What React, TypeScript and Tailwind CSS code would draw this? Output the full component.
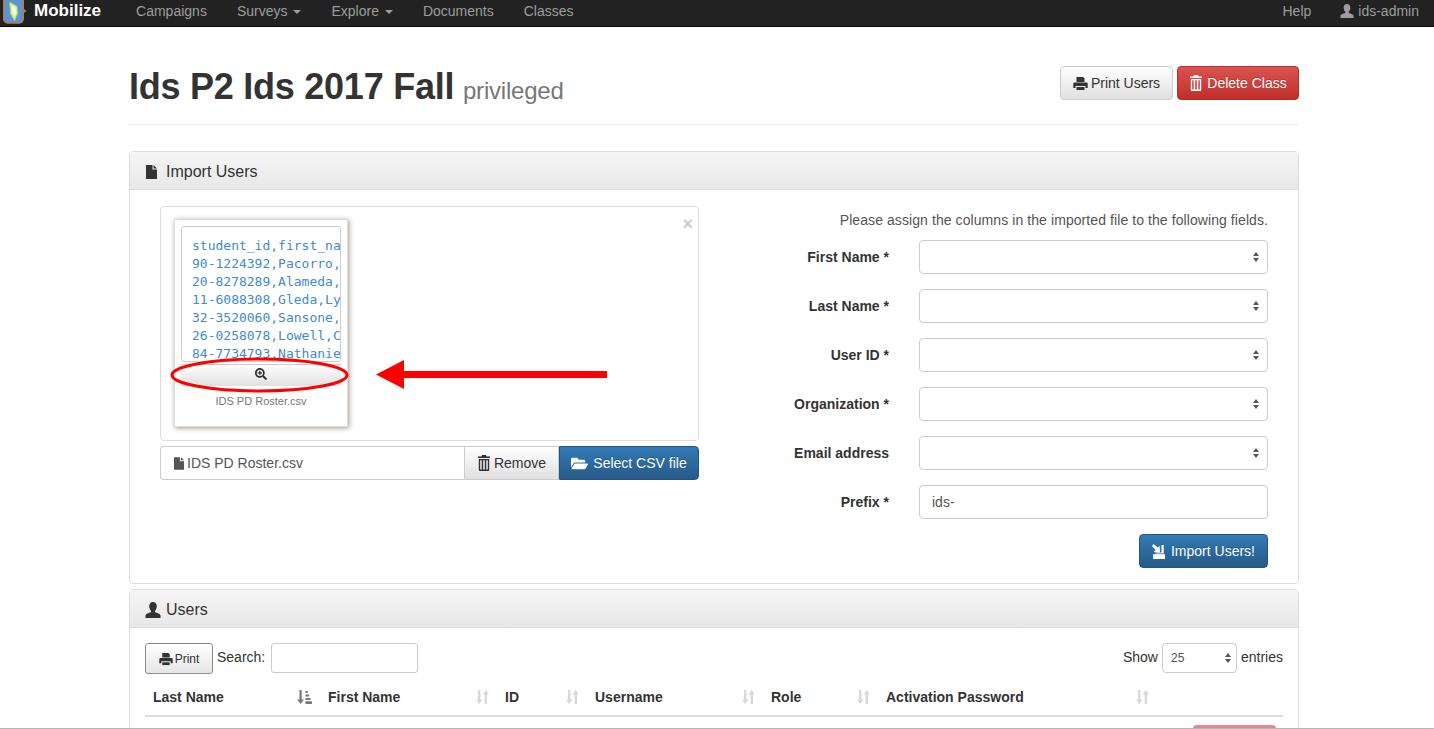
import { FaFolderOpen, FaSearchPlus } from "react-icons/fa";

const FIELDS = ["First Name *", "Last Name *", "User ID *", "Organization *", "Email address"];

const CSV_LINES = [
  "student_id,first_na",
  "90-1224392,Pacorro,",
  "20-8278289,Alameda,",
  "11-6088308,Gleda,Ly",
  "32-3520060,Sansone,",
  "26-0258078,Lowell,C",
  "84-7734793,Nathanie",
];

const COLUMNS = [
  { label: "Last Name", width: "w-[175px]", active: true },
  { label: "First Name", width: "w-[177px]", active: false },
  { label: "ID", width: "w-[90px]", active: false },
  { label: "Username", width: "w-[176px]", active: false },
  { label: "Role", width: "w-[115px]", active: false },
  { label: "Activation Password", width: "w-[279px]", active: false },
];

/* ── Glyphs drawn by hand, the icon packs have no close match ── */
function PrintIcon({ size = 15 }: { size?: number }) {
  return (
    <svg width={size} height={size} viewBox="0 0 15 15" fill="currentColor">
      <path d="M3.5 1h6.5l1.5 1.5V6h-8z" />
      <path d="M1.5 6.5h12a1.2 1.2 0 0 1 1.2 1.2V12h-2.2v-2h-10v2H.3V7.7a1.2 1.2 0 0 1 1.2-1.2z" />
      <path d="M3.5 11h8v3h-8z" />
    </svg>
  );
}

function TrashIcon() {
  return (
    <svg width="14" height="16" viewBox="0 0 14 16" fill="currentColor">
      <path d="M5 0h4l.6 1.5H13v1.6H1V1.5h3.4z" />
      <path
        fillRule="evenodd"
        d="M1.8 4h10.4v11a1 1 0 0 1-1 1H2.8a1 1 0 0 1-1-1zM3.2 5.2v9.4h1.5V5.2zM6.2 5.2v9.4h1.6V5.2zM9.3 5.2v9.4h1.5V5.2z"
      />
    </svg>
  );
}

function UserIcon({ size = 14 }: { size?: number }) {
  return (
    <svg width={size} height={size} viewBox="0 0 16 16" fill="currentColor">
      <path d="M8 0c2.4 0 3.8 1.7 3.8 4.2 0 1.8-.7 3.5-1.8 4.5v1.6c2.6.8 5.5 1.6 5.5 3.2V16H.5v-2.5c0-1.6 2.9-2.4 5.5-3.2V8.7C4.9 7.7 4.2 6 4.2 4.2 4.2 1.7 5.6 0 8 0z" />
    </svg>
  );
}

function FileIcon({ width = 11, height = 14 }: { width?: number; height?: number }) {
  return (
    <svg width={width} height={height} viewBox="0 0 11 14" fill="currentColor">
      <path d="M0 0h6.5v4.5H11V14H0z" />
      <path d="M7.5 0L11 3.5H7.5z" />
    </svg>
  );
}

function ImportIcon() {
  return (
    <svg width="14" height="15" viewBox="0 0 14 15" fill="currentColor">
      <path d="M1.5 0l4.2 3.6L7.5 1.8l.6 6.6-6.4-.4 1.9-2L0 2z" />
      <path d="M9.5 1h2.2v8.5H3.5V8.4h6z" />
      <path d="M1 10.2h12V15H1z" />
    </svg>
  );
}

/* Up/down arrows of the sortable table headers */
function SortIcon({ active }: { active: boolean }) {
  if (active) {
    return (
      <svg width="15" height="14" viewBox="0 0 15 14" className="text-[#777]" fill="currentColor">
        <path d="M2.5 0h2.2v9.5H7L3.6 14 .2 9.5h2.3z" />
        <path d="M8.5 1h2.2v2H8.5zM8.5 4.5h3.6v2H8.5zM8.5 8h5v2h-5zM8.5 11.3h6.4V14H8.5z" />
      </svg>
    );
  }
  return (
    <svg width="13" height="14" viewBox="0 0 13 14" className="text-[#d9d9d9]" fill="currentColor">
      <path d="M2 0h2.4v9.5h2L3.2 14 0 9.5h2z" />
      <path d="M8.6 14H11V4.5h2L9.8 0 6.6 4.5h2z" />
    </svg>
  );
}

function SelectArrows() {
  return (
    <svg width="8" height="12" viewBox="0 0 8 12" className="text-[#555]" fill="currentColor">
      <path d="M4 1l3 4H1zM4 11L1 7h6z" />
    </svg>
  );
}

export default function App() {
  return (
    <div className="relative h-[729px] w-[1434px] overflow-hidden bg-white font-['Liberation_Sans',Arial,sans-serif] text-[14px] text-[#333]">
      {/* ── Navbar ──────────────────────────── */}
      <nav className="flex h-[27px] items-center border-b border-[#080808] bg-[#222] text-[#9d9d9d]">
        <div className="flex h-full items-center overflow-hidden pl-[3px]">
          <svg width="24" height="26" viewBox="0 0 24 26">
            <rect x="0.75" y="-3" width="19.5" height="26" rx="4" fill="#5d92d6" stroke="#b5803f" strokeWidth="1.5" />
            <path d="M20.5 8.5l3 2.5-3 2.5z" fill="#b5803f" />
            <path d="M6.5 2l7.5 4 1 7-3.5 8-4-7z" fill="#d6ec9a" stroke="#9cc653" strokeWidth="0.8" />
            <path d="M8.5 5l4 2.5.6 5-1.8 3.5-2-4z" fill="#f6fbe4" />
          </svg>
          <span className="mb-[4px] ml-[7px] text-[17px] font-bold text-white">Mobilize</span>
        </div>
        <div className="mb-[4px] ml-[35px] flex items-center gap-[30px]">
          <span>Campaigns</span>
          <span className="flex items-center gap-[6px]">
            Surveys <span className="mt-[2px] border-x-[4px] border-t-[4px] border-x-transparent border-t-[#9d9d9d]" />
          </span>
          <span className="flex items-center gap-[6px]">
            Explore <span className="mt-[2px] border-x-[4px] border-t-[4px] border-x-transparent border-t-[#9d9d9d]" />
          </span>
          <span>Documents</span>
          <span>Classes</span>
        </div>
        <div className="mb-[4px] ml-auto flex items-center gap-[29px] pr-[15px]">
          <span>Help</span>
          <span className="flex items-center gap-[4px]">
            <UserIcon size={14} /> ids-admin
          </span>
        </div>
      </nav>

      <div className="ml-[129px] w-[1170px]">
        {/* ── Page header ─────────────────────── */}
        <div className="flex h-[98px] items-start justify-between border-b border-[#eee] pt-[39px]">
          <h1 className="mt-[1px] text-[36px] leading-[40px] font-bold tracking-[-0.25px]">
            Ids P2 Ids 2017 Fall{" "}
            <span className="ml-[-1px] text-[24px] font-normal tracking-[-0.2px] text-[#777]">privileged</span>
          </h1>
          <div className="flex gap-[4px]">
            <button className="flex h-[34px] w-[113px] items-center justify-center gap-[3px] rounded-[4px] border border-[#ccc] bg-gradient-to-b from-white to-[#e0e0e0]">
              <PrintIcon /> Print Users
            </button>
            <button className="flex h-[34px] w-[122px] items-center justify-center gap-[4px] rounded-[4px] border border-[#b92c28] bg-gradient-to-b from-[#d9534f] to-[#c12e2a] text-white [text-shadow:0_-1px_0_rgba(0,0,0,0.2)]">
              <TrashIcon /> Delete Class
            </button>
          </div>
        </div>

        {/* ── Import Users panel ──────────────── */}
        <section className="mt-[26px] h-[433px] rounded-[4px] border border-[#ddd]">
          <h3 className="flex h-[38px] items-center gap-[9px] border-b border-[#ddd] bg-gradient-to-b from-[#f5f5f5] to-[#e8e8e8] pt-[2px] pl-[16px] text-[16px]">
            <FileIcon /> Import Users
          </h3>
          <div className="flex pt-[16px] pl-[30px]">
            {/* File drop */}
            <div className="w-[539px]">
              <div className="relative h-[235px] rounded-[4px] border border-[#ddd] pt-[12px] pl-[13px]">
                <span className="absolute top-[7px] right-[5px] text-[18px] leading-[20px] font-bold text-[#ccc]">×</span>
                <div className="h-[208px] w-[174px] border border-[#ddd] px-[6px] pt-[6px] shadow-[1px_1px_5px_0_#a2958a]">
                  <div className="h-[136px] overflow-hidden rounded-[3px] border border-[#ccc] pt-[10px] pl-[10px] font-['DejaVu_Sans_Mono',monospace] text-[13px] leading-[18px] whitespace-pre text-[#428bca]">
                    {CSV_LINES.map((line) => (
                      <div key={line}>{line}</div>
                    ))}
                  </div>
                  <button className="mt-[2px] flex h-[22px] w-full items-center justify-center rounded-b-[3px] border-t border-[#ccc] bg-gradient-to-b from-white to-[#e0e0e0] pb-[3px]">
                    <FaSearchPlus className="text-[12px]" />
                  </button>
                  <p className="mt-[8px] text-center text-[11px] leading-[14px] text-[#777]">IDS PD Roster.csv</p>
                </div>
              </div>
              <div className="mt-[5px] flex h-[34px] rounded-[4px]">
                <div className="flex flex-1 items-center rounded-l-[4px] border border-r-0 border-[#ccc] pl-[13px] text-[#555]">
                  <FileIcon width={10} height={13} />
                  <span className="ml-[3px]">IDS PD Roster.csv</span>
                </div>
                <button className="flex w-[95px] items-center justify-center gap-[3px] border border-[#ccc] bg-gradient-to-b from-white to-[#e0e0e0]">
                  <TrashIcon /> Remove
                </button>
                <button className="flex w-[140px] items-center justify-center gap-[5px] rounded-r-[4px] border border-[#245580] bg-gradient-to-b from-[#337ab7] to-[#265a88] text-white [text-shadow:0_-1px_0_rgba(0,0,0,0.2)]">
                  <FaFolderOpen className="text-[17px]" /> Select CSV file
                </button>
              </div>
            </div>

            {/* Column assignment */}
            <div className="ml-[70px] w-[499px]">
              <p className="mt-[4px] mb-[10px] h-[20px] text-right tracking-[0.08px] text-[#555]">
                Please assign the columns in the imported file to the following fields.
              </p>
              <div className="flex flex-col gap-[15px]">
                {FIELDS.map((field) => (
                  <div key={field} className="flex items-center">
                    <label className="w-[120px] text-right font-bold">{field}</label>
                    <div className="ml-[30px] flex h-[34px] flex-1 items-center justify-end rounded-[4px] border border-[#ccc] pr-[7px]">
                      <SelectArrows />
                    </div>
                  </div>
                ))}
                <div className="flex items-center">
                  <label className="w-[120px] text-right font-bold">Prefix *</label>
                  <div className="ml-[30px] flex h-[34px] flex-1 items-center rounded-[4px] border border-[#ccc] pl-[12px] text-[#555]">
                    ids-
                  </div>
                </div>
              </div>
              <div className="mt-[15px] flex justify-end">
                <button className="flex h-[34px] w-[129px] items-center justify-center gap-[5px] rounded-[4px] border border-[#245580] bg-gradient-to-b from-[#337ab7] to-[#265a88] text-white [text-shadow:0_-1px_0_rgba(0,0,0,0.2)]">
                  <ImportIcon /> Import Users!
                </button>
              </div>
            </div>
          </div>
        </section>

        {/* ── Users panel ─────────────────────── */}
        <section className="mt-[5px] h-[160px] rounded-[4px] border border-[#ddd]">
          <h3 className="flex h-[38px] items-center gap-[5px] border-b border-[#ddd] bg-gradient-to-b from-[#f5f5f5] to-[#e8e8e8] pt-[2px] pl-[15px] text-[16px]">
            <UserIcon size={16} /> Users
          </h3>
          <div className="px-[15px]">
            <div className="mt-[15px] flex h-[31px] items-start">
              <button className="flex h-[31px] w-[68px] items-center justify-center gap-[2px] rounded-[3px] border border-[#8c8c8c] bg-gradient-to-b from-white to-[#e6e6e6] text-[12px]">
                <PrintIcon size={14} /> Print
              </button>
              <span className="ml-[4px] text-[14px] leading-[28px]">Search:</span>
              <div className="ml-[6px] h-[30px] w-[147px] rounded-[3px] border border-[#ccc]" />
              <span className="ml-auto leading-[28px]">Show</span>
              <div className="ml-[4px] flex h-[30px] w-[75px] items-center justify-between rounded-[4px] border border-[#ccc] pr-[4px] pl-[8px] text-[12px] text-[#555]">
                25 <SelectArrows />
              </div>
              <span className="ml-[4px] leading-[28px]">entries</span>
            </div>
            <div className="mt-[7px] flex h-[36px] items-center border-b-2 border-[#ddd] pb-[2px] pl-[8px] font-bold">
              {COLUMNS.map((col) => (
                <div key={col.label} className={`flex items-center justify-between pr-[16px] ${col.width}`}>
                  {col.label}
                  <SortIcon active={col.active} />
                </div>
              ))}
            </div>
            <div className="mt-[8px] flex justify-end pr-[7px]">
              <div className="h-[20px] w-[83px] rounded-t-[4px] bg-[#e28a87]" />
            </div>
          </div>
        </section>
      </div>

      {/* ── Annotation drawn over the screenshot ── */}
      <svg width="450" height="60" viewBox="0 0 450 60" className="absolute top-[346px] left-[165px]" fill="none">
        <ellipse cx="94.5" cy="29" rx="87.5" ry="16" stroke="#f00" strokeWidth="3" />
        <path d="M211 28.5L239 14v11h203v7H239v11z" fill="#f00" />
      </svg>

      {/* Window edge */}
      <div className="absolute bottom-0 left-0 h-px w-full bg-[#b5b5b5]" />
    </div>
  );
}
